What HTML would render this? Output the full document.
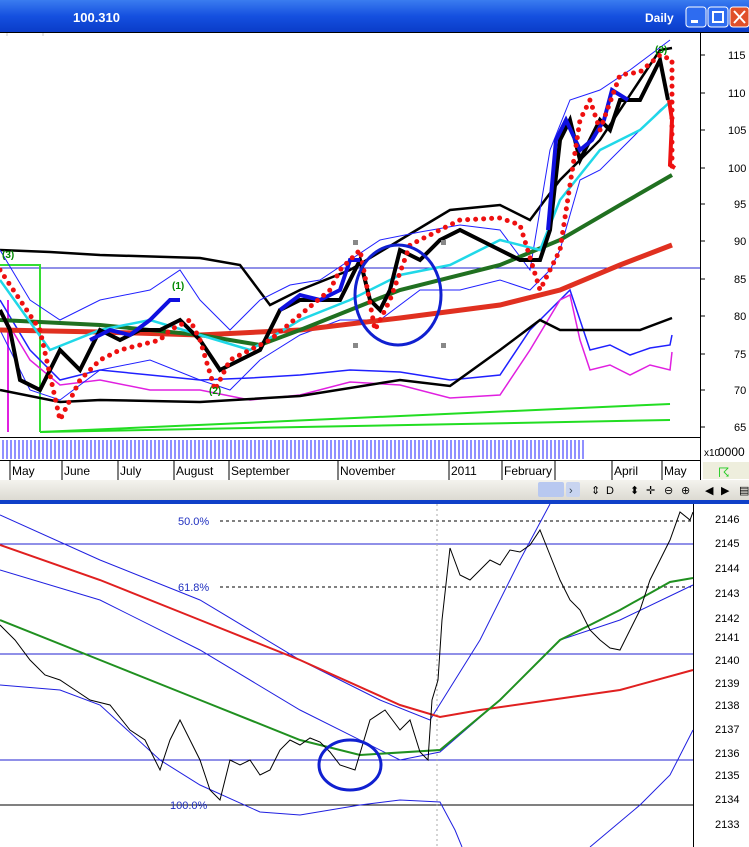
<!DOCTYPE html>
<html><head><style>
body{margin:0;width:749px;height:847px;overflow:hidden;background:#fff;font-family:"Liberation Sans",sans-serif}
svg{display:block}
</style></head><body>
<svg width="749" height="847" viewBox="0 0 749 847" xmlns="http://www.w3.org/2000/svg" font-family="Liberation Sans, sans-serif">
<defs>
<linearGradient id="tb" x1="0" y1="0" x2="0" y2="1"><stop offset="0" stop-color="#3a7cf0"/><stop offset="0.5" stop-color="#1550e0"/><stop offset="1" stop-color="#0a3cc8"/></linearGradient>
<linearGradient id="gb" x1="0" y1="0" x2="0" y2="1"><stop offset="0" stop-color="#f4f3ee"/><stop offset="1" stop-color="#dcdad2"/></linearGradient>
</defs>
<rect x="0" y="0" width="749" height="32" fill="url(#tb)"/>
<text x="73" y="22" fill="#fff" font-size="13" font-weight="bold">100.310</text>
<text x="645" y="22" fill="#fff" font-size="12" font-weight="bold">Daily</text>
<rect x="686" y="7" width="20" height="20" rx="3" fill="#2e6cf0" stroke="#fff"/><rect x="691" y="20" width="7" height="3" fill="#fff"/>
<rect x="708" y="7" width="20" height="20" rx="3" fill="#2e6cf0" stroke="#fff"/><rect x="713" y="12" width="10" height="10" fill="none" stroke="#fff" stroke-width="2"/>
<rect x="730" y="7" width="19" height="20" rx="3" fill="#e0502a" stroke="#fff"/><path d="M734 11l11 12M745 11l-11 12" stroke="#fff" stroke-width="2"/>
<line x1="0" y1="32.5" x2="749" y2="32.5" stroke="#000"/>
<!-- top chart grid -->
<g stroke="#ccc" stroke-width="1">
<line x1="7" y1="33" x2="7" y2="36"/><line x1="43" y1="33" x2="43" y2="36"/>
</g>
<line x1="700.5" y1="33" x2="700.5" y2="437" stroke="#000"/>
<g font-size="11" fill="#000">
<text x="728" y="59">115</text><text x="728" y="97">110</text><text x="728" y="134">105</text><text x="728" y="172">100</text><text x="734" y="208">95</text><text x="734" y="245">90</text><text x="734" y="283">85</text><text x="734" y="320">80</text><text x="734" y="358">75</text><text x="734" y="394">70</text><text x="734" y="431">65</text>
</g>
<g stroke="#000"><line x1="700" y1="55" x2="705" y2="55"/><line x1="700" y1="93" x2="705" y2="93"/><line x1="700" y1="130" x2="705" y2="130"/><line x1="700" y1="168" x2="705" y2="168"/><line x1="700" y1="204" x2="705" y2="204"/><line x1="700" y1="241" x2="705" y2="241"/><line x1="700" y1="279" x2="705" y2="279"/><line x1="700" y1="316" x2="705" y2="316"/><line x1="700" y1="354" x2="705" y2="354"/><line x1="700" y1="390" x2="705" y2="390"/><line x1="700" y1="427" x2="705" y2="427"/></g>
<line x1="0" y1="268" x2="700" y2="268" stroke="#2020d0"/>
<polyline fill="none" stroke="#22dd22" stroke-width="2" points="40,432 670,404"/>
<polyline fill="none" stroke="#22dd22" stroke-width="2" points="40,432 670,420"/>
<polyline fill="none" stroke="#33dd33" stroke-width="2" points="0,265 40,265 40,432"/>
<line x1="8" y1="300" x2="8" y2="432" stroke="#e020e0" stroke-width="2"/>
<!-- indicators -->
<polyline fill="none" stroke="#2020ff" stroke-width="1.5" points="0,300 30,350 60,380 100,370 150,375 200,380 250,378 300,375 350,370 400,372 450,380 500,375 530,330 560,300 570,290 580,320 590,350 610,345 630,355 650,348 670,345 672,335"/>
<polyline fill="none" stroke="#e020e0" stroke-width="1.5" points="0,310 30,360 60,385 100,380 150,390 200,390 250,400 300,395 350,382 400,385 450,398 500,395 530,350 560,300 570,295 580,340 590,370 610,365 630,375 650,365 670,370 672,352"/>
<!-- bands -->
<polyline fill="none" stroke="#000" stroke-width="2.5" points="0,250 50,252 100,255 200,258 240,265 270,305 300,290 350,270 400,240 450,210 500,205 530,220 560,180 600,140 640,80 660,50 672,48"/>
<polyline fill="none" stroke="#000" stroke-width="2.5" points="0,390 60,402 100,400 200,402 300,396 400,380 450,386 500,350 540,320 560,330 600,330 640,330 672,318"/>
<polyline fill="none" stroke="#2020ff" stroke-width="1" points="0,250 30,300 60,320 100,300 150,290 180,270 200,300 230,330 260,300 290,285 320,280 350,260 380,240 420,232 460,225 500,230 530,270 550,150 570,100 600,90 630,70 650,55 670,40"/>
<polyline fill="none" stroke="#2020ff" stroke-width="1" points="0,330 30,390 60,400 100,370 150,360 200,380 230,390 260,360 300,335 340,320 380,320 420,290 460,290 500,280 530,290 550,270 560,250 580,180 600,170 630,140 660,110 672,100"/>
<polyline fill="none" stroke="#e03020" stroke-width="5" points="0,330 100,332 200,335 300,330 400,318 500,305 560,290 620,265 672,245"/>
<polyline fill="none" stroke="#207020" stroke-width="4" points="0,320 100,325 200,335 260,345 300,330 400,290 500,265 560,240 620,205 672,175"/>
<polyline fill="none" stroke="#20d8e8" stroke-width="2.5" points="0,280 50,350 100,330 150,320 200,335 250,350 300,320 350,300 400,275 450,265 500,240 540,250 560,200 600,150 640,130 672,100"/>
<polyline fill="none" stroke="#000" stroke-width="4" points="0,310 10,330 20,380 40,390 60,350 80,370 100,330 120,340 140,330 160,330 180,320 200,340 220,370 240,360 260,350 280,310 300,300 320,300 340,300 360,260 370,300 380,310 390,290 400,250 420,260 440,240 460,230 480,240 500,250 520,260 540,260 550,230 560,140 570,120 580,160 590,140 600,120 610,130 620,100 640,100 660,60 668,100"/>
<polyline fill="none" stroke="#1010e0" stroke-width="4" points="280,310 300,295 320,300 340,290 350,260 360,260"/>
<polyline fill="none" stroke="#1010e0" stroke-width="4" points="548,230 556,140 566,120 580,150 592,140 604,120 612,90 628,100"/>
<polyline fill="none" stroke="#1010e0" stroke-width="4" points="90,340 110,330 130,335 150,320 170,300 180,300"/>
<polyline fill="none" stroke="#ee1010" stroke-width="5" stroke-dasharray="0 8" stroke-linecap="round" points="0,270 20,300 40,330 60,420 80,380 100,360 120,350 140,345 160,340 170,330 190,320 200,340 215,390 230,360 250,350 270,340 330,290 340,270 360,250 375,330 390,300 410,245 430,235 460,220 500,218 520,225 540,290 560,250 580,120 590,100 600,130 620,75 640,72 660,55 672,60 672,170"/>
<polyline fill="none" stroke="#ee1010" stroke-width="4" points="669,100 672,120 670,165 675,168"/>
<ellipse cx="398" cy="295" rx="43" ry="50" fill="none" stroke="#1020d0" stroke-width="3"/>
<g fill="#888"><rect x="353" y="240" width="5" height="5"/><rect x="441" y="240" width="5" height="5"/><rect x="353" y="343" width="5" height="5"/><rect x="441" y="343" width="5" height="5"/></g>
<g font-size="10" fill="#080" font-weight="bold"><text x="172" y="289">(1)</text><text x="209" y="394">(2)</text><text x="655" y="53">(3)</text><text x="2" y="258">(3)</text></g>
<!-- volume strip -->
<line x1="0" y1="437.5" x2="700" y2="437.5" stroke="#000"/>
<rect x="0" y="438" width="749" height="22" fill="#fff"/>
<g stroke="#2020ff" stroke-width="1" id="vol">
<path d="M3 440v19M7 440v19M11 440v19M15 440v19M19 440v19M23 440v19M27 440v19M31 440v19M35 440v19M39 440v19M43 440v19M47 440v19M51 440v19M55 440v19M59 440v19M63 440v19M67 440v19M71 440v19M75 440v19M79 440v19M83 440v19M87 440v19M91 440v19M95 440v19M99 440v19M103 440v19M107 440v19M111 440v19M115 440v19M119 440v19M123 440v19M127 440v19M131 440v19M135 440v19M139 440v19M143 440v19M147 440v19M151 440v19M155 440v19M159 440v19M163 440v19M167 440v19M171 440v19M175 440v19M179 440v19M183 440v19M187 440v19M191 440v19M195 440v19M199 440v19M203 440v19M207 440v19M211 440v19M215 440v19M219 440v19M223 440v19M227 440v19M231 440v19M235 440v19M239 440v19M243 440v19M247 440v19M251 440v19M255 440v19M259 440v19M263 440v19M267 440v19M271 440v19M275 440v19M279 440v19M283 440v19M287 440v19M291 440v19M295 440v19M299 440v19M303 440v19M307 440v19M311 440v19M315 440v19M319 440v19M323 440v19M327 440v19M331 440v19M335 440v19M339 440v19M343 440v19M347 440v19M351 440v19M355 440v19M359 440v19M363 440v19M367 440v19M371 440v19M375 440v19M379 440v19M383 440v19M387 440v19M391 440v19M395 440v19M399 440v19M403 440v19M407 440v19M411 440v19M415 440v19M419 440v19M423 440v19M427 440v19M431 440v19M435 440v19M439 440v19M443 440v19M447 440v19M451 440v19M455 440v19M459 440v19M463 440v19M467 440v19M471 440v19M475 440v19M479 440v19M483 440v19M487 440v19M491 440v19M495 440v19M499 440v19M503 440v19M507 440v19M511 440v19M515 440v19M519 440v19M523 440v19M527 440v19M531 440v19M535 440v19M539 440v19M543 440v19M547 440v19M551 440v19M555 440v19M559 440v19M563 440v19M567 440v19M571 440v19M575 440v19M579 440v19M583 440v19"/>
</g>
<line x1="0" y1="460.5" x2="700" y2="460.5" stroke="#000"/>
<text x="704" y="456" font-size="10">x10</text><text x="718" y="456" font-size="12">0000</text>
<line x1="700.5" y1="437" x2="700.5" y2="480" stroke="#000"/>
<!-- month axis -->
<g stroke="#000"><line x1="10" y1="461" x2="10" y2="480"/><line x1="62" y1="461" x2="62" y2="480"/><line x1="118" y1="461" x2="118" y2="480"/><line x1="174" y1="461" x2="174" y2="480"/><line x1="229" y1="461" x2="229" y2="480"/><line x1="338" y1="461" x2="338" y2="480"/><line x1="449" y1="461" x2="449" y2="480"/><line x1="502" y1="461" x2="502" y2="480"/><line x1="555" y1="461" x2="555" y2="480"/><line x1="612" y1="461" x2="612" y2="480"/><line x1="662" y1="461" x2="662" y2="480"/></g>
<g font-size="12"><text x="12" y="475">May</text><text x="64" y="475">June</text><text x="120" y="475">July</text><text x="176" y="475">August</text><text x="231" y="475">September</text><text x="340" y="475">November</text><text x="451" y="475">2011</text><text x="504" y="475">February</text><text x="614" y="475">April</text><text x="664" y="475">May</text></g>
<rect x="703" y="462" width="46" height="17" fill="#eeeedd"/>
<text x="718" y="477" font-size="13" fill="#2c2">☈</text>
<!-- toolbar -->
<rect x="0" y="480" width="749" height="20" fill="url(#gb)"/>
<rect x="538" y="482" width="26" height="15" rx="2" fill="#b8c8f0"/>
<rect x="566" y="482" width="14" height="15" rx="2" fill="#c8d4f0"/><text x="569" y="494" font-size="11" fill="#345">›</text>
<g font-size="11" fill="#000"><text x="591" y="494">⇕</text><text x="606" y="494">D</text><text x="630" y="494">⬍</text><text x="646" y="494">✛</text><text x="664" y="494">⊖</text><text x="681" y="494">⊕</text><text x="705" y="494">◀</text><text x="721" y="494">▶</text><text x="739" y="494">▤</text></g>
<rect x="0" y="500" width="749" height="4" fill="#1040c8"/>
<!-- bottom chart -->
<line x1="693.5" y1="504" x2="693.5" y2="847" stroke="#000"/>
<g font-size="11"><text x="715" y="523">2146</text><text x="715" y="547">2145</text><text x="715" y="572">2144</text><text x="715" y="597">2143</text><text x="715" y="622">2142</text><text x="715" y="641">2141</text><text x="715" y="664">2140</text><text x="715" y="687">2139</text><text x="715" y="709">2138</text><text x="715" y="733">2137</text><text x="715" y="757">2136</text><text x="715" y="779">2135</text><text x="715" y="803">2134</text><text x="715" y="828">2133</text></g>
<line x1="0" y1="544" x2="693" y2="544" stroke="#2020d0"/>
<line x1="0" y1="654" x2="693" y2="654" stroke="#2020d0"/>
<line x1="0" y1="760" x2="693" y2="760" stroke="#2020d0"/>
<line x1="0" y1="805" x2="693" y2="805" stroke="#000"/>
<line x1="220" y1="521" x2="693" y2="521" stroke="#000" stroke-dasharray="3 3"/>
<line x1="220" y1="587" x2="693" y2="587" stroke="#000" stroke-dasharray="3 3"/>
<line x1="437" y1="504" x2="437" y2="847" stroke="#aaa" stroke-dasharray="2 3"/>
<g font-size="11" fill="#2030c0"><text x="178" y="525">50.0%</text><text x="178" y="591">61.8%</text><text x="170" y="809">100.0%</text></g>
<polyline fill="none" stroke="#2020e0" stroke-width="1" points="0,515 100,560 200,600 300,660 380,700 430,720 480,640 520,560 550,504"/>
<polyline fill="none" stroke="#2020e0" stroke-width="1" points="0,570 100,600 200,650 300,710 400,760 440,752 500,700 560,640 620,620 693,585"/>
<polyline fill="none" stroke="#2020e0" stroke-width="1" points="0,685 60,690 100,705 160,760 200,785 260,812 300,815 360,805 400,800 440,802 455,830 462,847"/>
<polyline fill="none" stroke="#2020e0" stroke-width="1" points="590,847 640,805 670,775 693,730"/>
<polyline fill="none" stroke="#e02020" stroke-width="2" points="0,545 100,580 200,620 300,660 400,705 440,717 480,710 550,700 620,690 693,670"/>
<polyline fill="none" stroke="#209020" stroke-width="2" points="0,620 100,660 200,700 300,740 360,755 440,750 500,700 560,640 620,610 670,582 693,578"/>
<polyline fill="none" stroke="#000" stroke-width="1" points="0,625 15,640 30,660 45,675 60,680 75,690 90,700 110,705 130,730 145,740 160,770 170,740 180,720 190,740 200,760 210,790 220,800 230,760 240,765 250,760 260,775 270,770 280,750 290,740 300,745 310,738 320,742 330,752 340,765 355,770 370,720 385,710 400,730 410,720 420,752 428,760 432,700 438,680 442,620 450,548 460,575 470,580 480,570 490,560 500,565 510,550 520,552 530,545 540,530 548,550 560,580 570,600 580,610 590,630 600,640 610,648 620,650 630,630 640,610 650,580 660,560 670,540 680,512 690,520 693,512"/>
<ellipse cx="350" cy="765" rx="31" ry="25" fill="none" stroke="#1020d0" stroke-width="3"/>
</svg>
</body></html>
